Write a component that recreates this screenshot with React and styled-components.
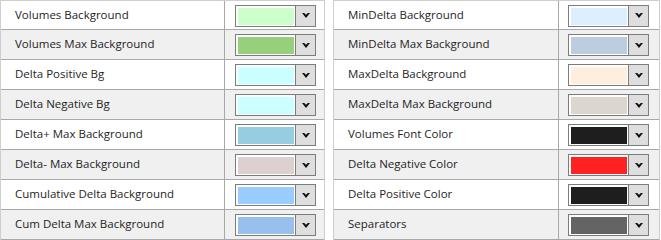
import React from 'react';
import styled, { createGlobalStyle } from 'styled-components';

const leftRows = [
  { label: 'Volumes Background', color: '#ccffcc' },
  { label: 'Volumes Max Background', color: '#97cf7b' },
  { label: 'Delta Positive Bg', color: '#ccffff' },
  { label: 'Delta Negative Bg', color: '#ccffff' },
  { label: 'Delta+ Max Background', color: '#96cde0' },
  { label: 'Delta- Max Background', color: '#dcd0d0' },
  { label: 'Cumulative Delta Background', color: '#99ccff' },
  { label: 'Cum Delta Max Background', color: '#99c0ec' },
];

const rightRows = [
  { label: 'MinDelta Background', color: '#ddeeff' },
  { label: 'MinDelta Max Background', color: '#bccddf' },
  { label: 'MaxDelta Background', color: '#ffeedd' },
  { label: 'MaxDelta Max Background', color: '#ddd6cf' },
  { label: 'Volumes Font Color', color: '#1e1e1e' },
  { label: 'Delta Negative Color', color: '#ff2222' },
  { label: 'Delta Positive Color', color: '#1e1e1e' },
  { label: 'Separators', color: '#646464' },
];

const GlobalStyle = createGlobalStyle`
  body {
    margin: 0;
    background: #fff;
    font-family: "Open Sans", "Noto Sans", sans-serif;
  }
`;

const Page = styled.div`
  display: flex;
  gap: 8px;
  width: 661px;
  height: 240px;
  overflow: hidden;
`;

const Panel = styled.div`
  width: ${(p) => p.width}px;
  box-sizing: border-box;
  border-left: 1px solid #cfcfcf;
  border-right: 1px solid #cfcfcf;
  border-top: 1px solid #cfcfcf;
`;

const Row = styled.div`
  display: grid;
  grid-template-columns: ${(p) => p.labelWidth}px 1fr;
  height: 30px;
  box-sizing: border-box;
  border-bottom: 1px solid #a8a8a8;
  background: ${(p) => (p.odd ? '#f0f0f0' : '#ffffff')};

  &:first-child {
    height: 29px;
  }
`;

const Label = styled.div`
  display: flex;
  align-items: center;
  padding-left: 14px;
  padding-bottom: 2px;
  border-right: 1px solid #a8a8a8;
  font-size: 11.5px;
  color: #1e1e1e;
  white-space: nowrap;
`;

const Cell = styled.div`
  display: flex;
  align-items: center;
  padding-left: ${(p) => p.pad}px;
  padding-top: 1px;
`;

const Picker = styled.div`
  display: flex;
  width: 81px;
  height: 22px;
  box-sizing: border-box;
  border: 1px solid #7c7c7c;
  background: #fff;
`;

const Swatch = styled.div`
  flex: 1;
  margin: 2px 1px 1px 2px;
  background: ${(p) => p.color};
`;

const Button = styled.div`
  width: 19px;
  display: flex;
  align-items: center;
  justify-content: center;
  border-left: 1px solid #7c7c7c;
  background: #dedede;
`;

const Arrow = () => (
  <svg width="8" height="5" viewBox="0 0 8 5">
    <polygon points="0,0 2.2,0 4,1.8 5.8,0 8,0 4,5" fill="#111" />
  </svg>
);

const ColorRow = ({ label, color, odd, labelWidth, pad }) => (
  <Row odd={odd} labelWidth={labelWidth}>
    <Label>{label}</Label>
    <Cell pad={pad}>
      <Picker>
        <Swatch color={color} />
        <Button>
          <Arrow />
        </Button>
      </Picker>
    </Cell>
  </Row>
);

const App = () => (
  <>
    <GlobalStyle />
    <Page>
      <Panel width={325}>
        {leftRows.map((r, i) => (
          <ColorRow key={r.label} {...r} odd={i % 2 === 1} labelWidth={224} pad={10} />
        ))}
      </Panel>
      <Panel width={327}>
        {rightRows.map((r, i) => (
          <ColorRow key={r.label} {...r} odd={i % 2 === 1} labelWidth={225} pad={9} />
        ))}
      </Panel>
    </Page>
  </>
);

export default App;
